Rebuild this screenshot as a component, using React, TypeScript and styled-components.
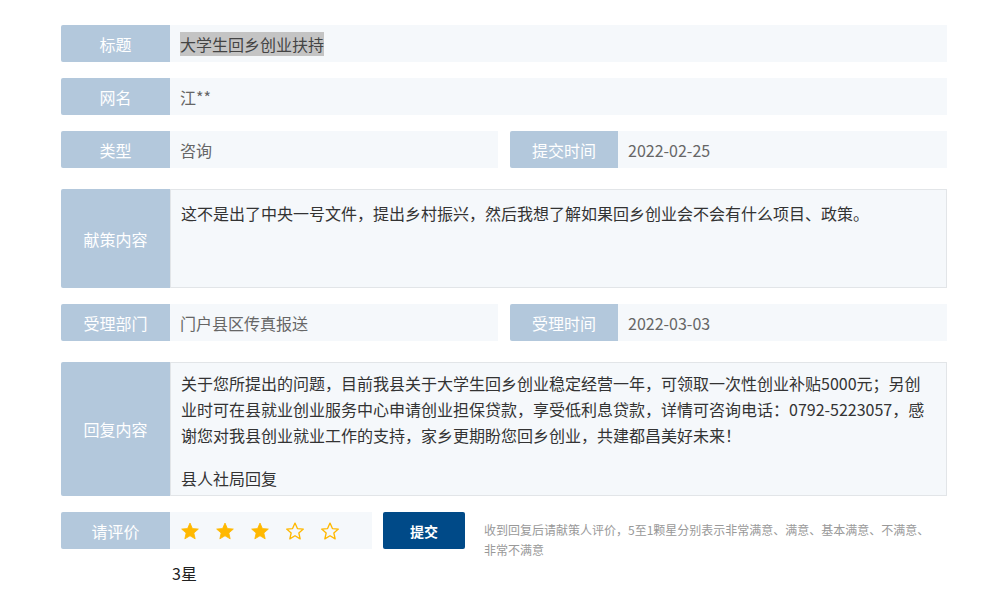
import React from "react";
import styled, { createGlobalStyle } from "styled-components";

const Global = createGlobalStyle`
  html, body { margin: 0; padding: 0; background: #fff; }
  body { font-family: "Microsoft YaHei", "Noto Sans CJK SC", "Noto Sans", sans-serif; }
`;

const Page = styled.div`
  width: 886px;
  padding: 25px 0 0 61px;
  display: flex;
  flex-direction: column;
`;

const Row = styled.div<{ $mt?: number }>`
  display: flex;
  align-items: flex-start;
  margin-top: ${(p) => p.$mt ?? 0}px;
`;

const RateRow = styled(Row)`
  height: 37px;
`;

const Half = styled.div`
  display: flex;
  gap: 12px;
  width: 100%;
`;

const Field = styled.div<{ $h?: number }>`
  display: flex;
  flex: 1;
  min-height: ${(p) => p.$h ?? 37}px;
`;

const Label = styled.div<{ $w?: number }>`
  flex: 0 0 ${(p) => p.$w ?? 109}px;
  min-height: 37px;
  align-self: stretch;
  background: #b3c8dc;
  color: #fff;
  font-size: 16px;
  display: flex;
  align-items: center;
  justify-content: center;
  border-radius: 2px 0 0 2px;
`;

const Value = styled.div<{ $dark?: boolean }>`
  flex: 1;
  background: #f5f8fb;
  color: ${(p) => (p.$dark ? "#333" : "#666")};
  font-size: 16px;
  display: flex;
  align-items: center;
  padding: 0 10px;
`;

const Box = styled.div<{ $pt: number; $pb: number }>`
  flex: 1;
  background: #f5f8fb;
  border: 1px solid #e2e5e8;
  color: #333;
  font-size: 16px;
  line-height: 26px;
  padding: ${(p) => p.$pt}px 10px ${(p) => p.$pb}px 10px;
`;

const Sign = styled.div`
  margin-top: 17px;
`;

const Mark = styled.span`
  background: #c4c4c4;
  color: #444;
`;

const RateGroup = styled.div`
  display: flex;
  height: 37px;
`;

const Stars = styled.div`
  flex: 0 0 202px;
  background: #f5f8fb;
  display: flex;
  align-items: center;
  padding-left: 10px;
  gap: 15px;
  box-sizing: border-box;
`;

const Submit = styled.button`
  margin-left: 11px;
  width: 82px;
  height: 37px;
  border: none;
  border-radius: 2px;
  background: #004a88;
  color: #fff;
  font-family: inherit;
  font-size: 14px;
  font-weight: bold;
  cursor: pointer;
`;

const Help = styled.div`
  margin-left: 19px;
  padding-top: 8px;
  width: 470px;
  color: #999;
  font-size: 12px;
  line-height: 20px;
`;

const Result = styled.div`
  margin: 13px 0 0 111px;
  font-size: 16px;
  color: #222;
  line-height: 22px;
`;

const Star = ({ filled }: { filled: boolean }) => (
  <svg width="20" height="20" viewBox="0 0 24 24">
    <path
      d="M12 2.5l2.9 6.6 7.1.6-5.4 4.7 1.6 7-6.2-3.7-6.2 3.7 1.6-7L2 9.7l7.1-.6z"
      fill={filled ? "#ffb800" : "none"}
      stroke="#ffb800"
      strokeWidth={filled ? 1 : 1.6}
      strokeLinejoin="round"
    />
  </svg>
);

export default function App() {
  const rating = 3;
  return (
    <>
      <Global />
      <Page>
        <Row>
          <Field>
            <Label>标题</Label>
            <Value>
              <Mark>大学生回乡创业扶持</Mark>
            </Value>
          </Field>
        </Row>
        <Row $mt={16}>
          <Field>
            <Label>网名</Label>
            <Value>江**</Value>
          </Field>
        </Row>
        <Row $mt={16}>
          <Half>
            <Field>
              <Label>类型</Label>
              <Value>咨询</Value>
            </Field>
            <Field>
              <Label $w={108}>提交时间</Label>
              <Value>2022-02-25</Value>
            </Field>
          </Half>
        </Row>
        <Row $mt={21}>
          <Field $h={99}>
            <Label>献策内容</Label>
            <Box $pt={10} $pb={10}>
              这不是出了中央一号文件，提出乡村振兴，然后我想了解如果回乡创业会不会有什么项目、政策。
            </Box>
          </Field>
        </Row>
        <Row $mt={16}>
          <Half>
            <Field>
              <Label>受理部门</Label>
              <Value>门户县区传真报送</Value>
            </Field>
            <Field>
              <Label $w={108}>受理时间</Label>
              <Value>2022-03-03</Value>
            </Field>
          </Half>
        </Row>
        <Row $mt={21}>
          <Field>
            <Label>回复内容</Label>
            <Box $pt={7} $pb={4}>
              关于您所提出的问题，目前我县关于大学生回乡创业稳定经营一年，可领取一次性创业补贴5000元；另创业时可在县就业创业服务中心申请创业担保贷款，享受低利息贷款，详情可咨询电话：0792-5223057，感谢您对我县创业就业工作的支持，家乡更期盼您回乡创业，共建都昌美好未来！
              <Sign>县人社局回复</Sign>
            </Box>
          </Field>
        </Row>
        <RateRow $mt={16}>
          <RateGroup>
            <Label>请评价</Label>
            <Stars>
              {[1, 2, 3, 4, 5].map((i) => (
                <Star key={i} filled={i <= rating} />
              ))}
            </Stars>
            <Submit>提交</Submit>
          </RateGroup>
          <Help>
            收到回复后请献策人评价，5至1颗星分别表示非常满意、满意、基本满意、不满意、
            <br />
            非常不满意
          </Help>
        </RateRow>
        <Result>{rating}星</Result>
      </Page>
    </>
  );
}
